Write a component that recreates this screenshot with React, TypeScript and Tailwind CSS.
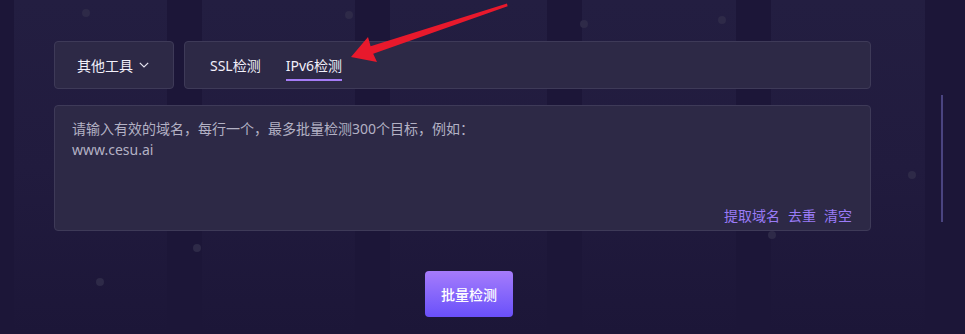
import {useState} from 'react';

const bands = [
  {w: 'w-[14px]', light: false},
  {w: 'w-[153px]', light: true},
  {w: 'w-[35px]', light: false},
  {w: 'w-[153px]', light: true},
  {w: 'w-[35px]', light: false},
  {w: 'w-[157px]', light: true},
  {w: 'w-[35px]', light: false},
  {w: 'w-[154px]', light: true},
  {w: 'w-[35px]', light: false},
  {w: 'w-[154px]', light: true},
  {w: 'flex-1', light: false},
];

const dots = [
  {left: 86, top: 13},
  {left: 349, top: 15},
  {left: 584, top: 24},
  {left: 722, top: 20},
  {left: 912, top: 175},
  {left: 772, top: 235},
  {left: 197, top: 248},
  {left: 100, top: 282},
];

function Backdrop() {
  return (
    <div className="absolute inset-0 pointer-events-none">
      <div className="flex h-full">
        {bands.map((band, i) => (
          <div
            key={i}
            className={`${band.w} h-full ${band.light ? 'bg-gradient-to-b from-[#231e41] via-[#211b3e] to-[#1c1638]' : ''}`}
          />
        ))}
      </div>
      {dots.map((dot, i) => (
        <span
          key={i}
          className="absolute w-[8px] h-[8px] rounded-full bg-[#2e2a48]"
          style={{left: dot.left - 4, top: dot.top - 4}}
        />
      ))}
      <span className="absolute left-[941px] top-[95px] w-[2px] h-[127px] bg-[#4a4480]" />
    </div>
  );
}

function Arrow() {
  return (
    <svg className="absolute left-0 top-0 pointer-events-none" width="965" height="334" viewBox="0 0 965 334">
      <polygon
        points="351,57 368,37 370.6,46.2 507,3.6 507.6,6.2 373.2,53.8 377,62"
        fill="#e8192c"
      />
    </svg>
  );
}

export default function App() {
  const [tab, setTab] = useState('ipv6');

  return (
    <div
      className="relative w-full h-[334px] overflow-hidden bg-[#1c1638]"
      style={{fontFamily: '"Noto Sans", "Noto Sans CJK SC", sans-serif'}}
    >
      <Backdrop />

      <div className="relative w-[817px] ml-[54px] pt-[41px]">
        <div className="flex gap-[10px] h-[48px]">
          <button className="w-[120px] flex items-center justify-center gap-[6px] pr-[2px] rounded-[4px] border border-[#3e3a58] bg-[#2d2946] text-[14px] text-[#f2f0fa]">
            其他工具
            <svg width="10" height="6" viewBox="0 0 10 6" fill="none">
              <path d="M0.8 0.8 5 5 9.2 0.8" stroke="#e6e4f0" strokeWidth="1.2" />
            </svg>
          </button>

          <div className="flex-1 flex items-stretch gap-[25px] pl-[25px] rounded-[4px] border border-[#3e3a58] bg-[#2d2946] text-[14px] text-[#f2f0fa]">
            <button onClick={() => setTab('ssl')} className="relative flex items-center">
              SSL检测
              {tab === 'ssl' && <span className="absolute left-0 right-0 bottom-[7px] h-[2px] bg-[#a57cf6]" />}
            </button>
            <button onClick={() => setTab('ipv6')} className="relative flex items-center">
              IPv6检测
              {tab === 'ipv6' && <span className="absolute left-0 right-0 bottom-[7px] h-[2px] bg-[#a57cf6]" />}
            </button>
          </div>
        </div>

        <div className="mt-[16px] h-[126px] flex flex-col rounded-[4px] border border-[#3e3a58] bg-[#2d2946]">
          <textarea
            className="flex-1 resize-none bg-transparent outline-none px-[17px] pt-[12px] text-[14px] leading-[21px] text-[#e6e4f0] placeholder:text-[#b3b1c4]"
            placeholder={'请输入有效的域名，每行一个，最多批量检测300个目标，例如：\nwww.cesu.ai'}
          />
          <div className="flex justify-end gap-[8px] pr-[18px] pb-[4px] h-[24px] text-[14px] leading-[20px] text-[#9a7bf7]">
            <button>提取域名</button>
            <button>去重</button>
            <button>清空</button>
          </div>
        </div>

        <div className="flex mt-[40px]">
          <button className="ml-[371px] w-[88px] h-[46px] rounded-[4px] bg-gradient-to-b from-[#a67bfb] to-[#6a4ffa] text-[14px] font-medium text-white">
            批量检测
          </button>
        </div>
      </div>

      <Arrow />
    </div>
  );
}
